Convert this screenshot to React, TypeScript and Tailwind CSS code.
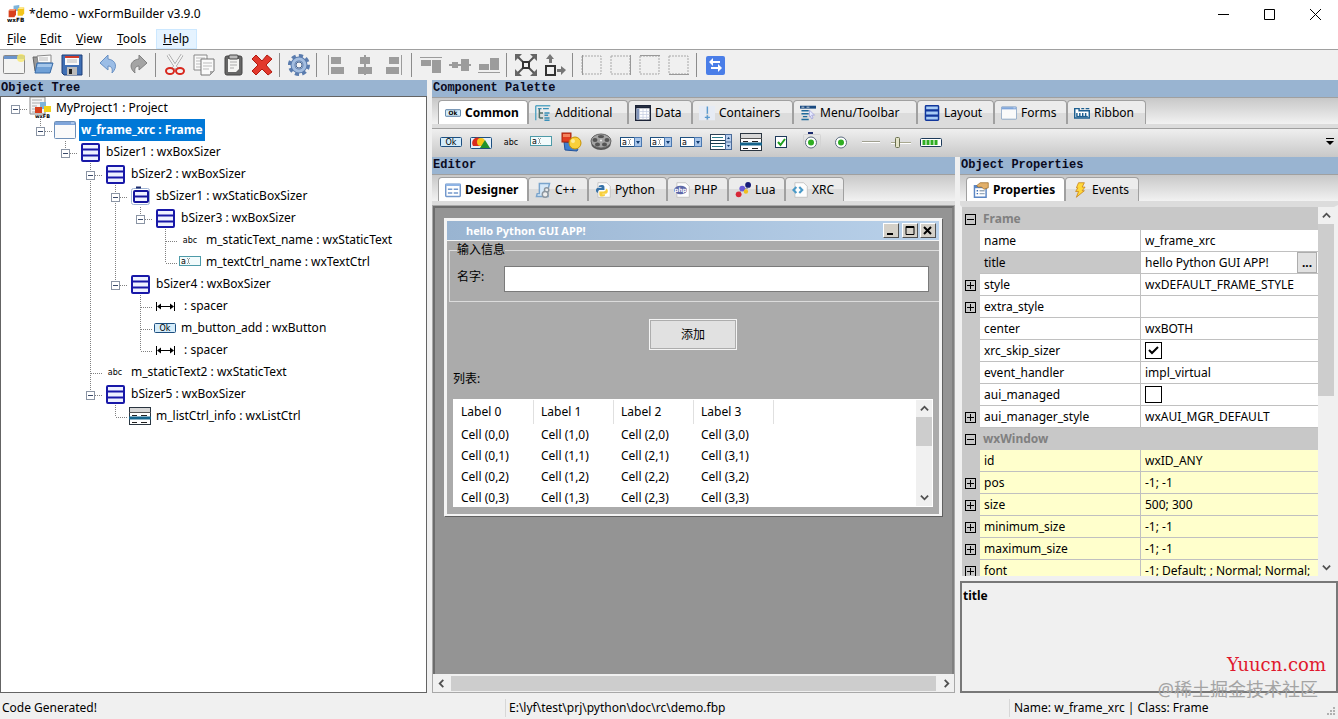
import React, { useState } from 'react';

type IconProps = { className?: string };

const Ico: React.FC<{ children: React.ReactNode; className?: string }> = ({ children, className = 'w-[22px] h-[22px]' }) => (
    <svg viewBox="0 0 22 22" className={`${className} shrink-0`} aria-hidden="true">{children}</svg>
);

const Tiny: React.FC<{ x: number; y: number; size?: number; children: string }> = ({ x, y, size = 9, children }) => (
    <text x={x} y={y} fontSize={size} fontFamily="DejaVu Sans" fill="#000">{children}</text>
);

/* ---------- component icons, shared by the tree, the palette and the tabs ---------- */

const CubesIcon = ({ className }: IconProps) => (
    <Ico className={className}>
        <path d="M8 1l7-1v7l-7 1z" fill="#7db4dc" />
        <path d="M13 5l2-2h6v7l-2 3h-6z" fill="#f2c41c" />
        <path d="M13 5l2-2h6l-1 2z" fill="#ffe98a" />
        <path d="M2 7l2-2h7v7l-2 3H2z" fill="#d8401c" />
        <path d="M2 7l2-2h7l-2 2z" fill="#f79a76" />
        <text x="0" y="21" fontSize="7" fontWeight="bold" fontFamily="DejaVu Sans">wxFB</text>
    </Ico>
);

const ProjectIcon = ({ className }: IconProps) => (
    <Ico className={className}>
        <path d="M1 0h15v17H1z" fill="#f4f4f4" stroke="#888" />
        <path d="M3 3h10M3 6h10M3 9h5M3 12h3M3 15h3" stroke="#aaa" />
        <path d="M11 5h6v7h-6z" fill="#7db4dc" />
        <path d="M15 9h7v6h-7z" fill="#f2d21c" />
        <path d="M6 10h7v6H6z" fill="#d8401c" />
        <text x="6" y="21" fontSize="5" fontWeight="bold" fontFamily="DejaVu Sans">wxFB</text>
    </Ico>
);

const FrameIcon = ({ className }: IconProps) => (
    <Ico className={className}>
        <rect x="0.5" y="2.5" width="21" height="17" rx="1" fill="#fafafa" stroke="#6d8fb8" />
        <path d="M1 3h20v3H1z" fill="#7fa5da" />
        <path d="M17 4h3" stroke="#dbe8fa" />
    </Ico>
);

const SizerIcon = ({ className }: IconProps) => (
    <Ico className={className}>
        <rect x="3" y="3" width="17" height="17" rx="1" fill="#eef1ff" stroke="#1818a8" strokeWidth="2" />
        <path d="M3 8.5h17M3 14.5h17" stroke="#1818a8" strokeWidth="2" />
    </Ico>
);

const StaticSizerIcon = ({ className }: IconProps) => (
    <Ico className={className}>
        <rect x="2.5" y="3.5" width="18" height="16" rx="2" fill="none" stroke="#a0b4d4" />
        <rect x="5" y="6" width="14" height="11" rx="1" fill="#eef0ff" stroke="#14149c" strokeWidth="2" />
        <path d="M5 11.5h14" stroke="#14149c" strokeWidth="2" />
        <path d="M7 2.5h5" stroke="#1a2a6c" strokeWidth="2" />
    </Ico>
);

const AbcIcon = ({ className }: IconProps) => (
    <Ico className={className}>
        <text x="11" y="14" fontSize="8" textAnchor="middle" fontFamily="DejaVu Sans">abc</text>
    </Ico>
);

const TextCtrlIcon = ({ className }: IconProps) => (
    <Ico className={className}>
        <rect x="0.5" y="5.5" width="21" height="9" fill="#f2fbfc" stroke="#4d9aa8" />
        <Tiny x={2} y={13} size={8}>a</Tiny>
        <path d="M8 7.5h1m1 0h1M9.5 8v4M8 12.5h1m1 0h1" stroke="#999" />
    </Ico>
);

const ButtonIcon = ({ className }: IconProps) => (
    <Ico className={className}>
        <rect x="0.5" y="6.5" width="21" height="9" rx="1" fill="#d5ecfa" stroke="#1d4f80" />
        <text x="11" y="14" fontSize="8" textAnchor="middle" fontFamily="DejaVu Sans">Ok</text>
    </Ico>
);

const SpacerIcon = ({ className }: IconProps) => (
    <Ico className={className}>
        <path d="M2.5 7v9M20.5 7v9M4 11.5h15" stroke="#000" />
        <path d="M3 11.5l4-3v6zM20 11.5l-4-3v6z" />
    </Ico>
);

const ListCtrlIcon = ({ className }: IconProps) => (
    <Ico className={className}>
        <rect x="0.5" y="2.5" width="21" height="17" fill="#fff" stroke="#2a3540" />
        <path d="M1 3h20v4H1z" fill="#d8d8d8" />
        <path d="M0 7.5h22" stroke="#555" />
        <path d="M0 13h22" stroke="#14648c" strokeWidth="3" />
        <path d="M3 10.5h5M12 10.5h6M3 17.5h5M12 17.5h6" stroke="#222" />
    </Ico>
);

const BitmapButtonIcon = () => (
    <Ico>
        <rect x="0.5" y="6.5" width="21" height="11" rx="1" fill="#e4f0fa" stroke="#1d4f80" />
        <path d="M3 15a5 5 0 0 1 9-6v6z" fill="#d92b1e" />
        <circle cx="11" cy="11" r="4" fill="#f5c518" />
        <path d="M10 17l5-8 5 8z" fill="#21912b" />
    </Ico>
);

const BitmapIcon = () => (
    <Ico>
        <path d="M4 11l8 1 6 6-1 2-12-1z" fill="#3f7fd0" stroke="#22539a" />
        <rect x="2" y="2" width="9" height="9" fill="#e03c20" stroke="#a4240f" />
        <path d="M3 3h7v3H3z" fill="#f4825c" />
        <circle cx="15" cy="12" r="6" fill="#f9cf3a" stroke="#c79205" />
        <circle cx="13" cy="10" r="2" fill="#fdeb9a" />
    </Ico>
);

const AnimIcon = () => (
    <Ico>
        <ellipse cx="11" cy="12" rx="10" ry="7" fill="#555" />
        <ellipse cx="11" cy="10" rx="10" ry="7" fill="#a4a4a4" stroke="#666" />
        <ellipse cx="11" cy="5.5" rx="3" ry="1.5" fill="#555" />
        <ellipse cx="5" cy="9" rx="2.500" ry="2" fill="#555" />
        <ellipse cx="17" cy="9" rx="2.500" ry="2" fill="#555" />
        <ellipse cx="7.500" cy="13.500" rx="2.500" ry="2" fill="#555" />
        <ellipse cx="14.500" cy="13.500" rx="2.500" ry="2" fill="#555" />
        <circle cx="11" cy="9.500" r="1" fill="#eee" />
    </Ico>
);

const ComboIcon: React.FC<{ caret?: boolean }> = ({ caret = true }) => (
    <Ico>
        <rect x="0.5" y="6.5" width="21" height="9" fill="#fff" stroke="#1d4f80" />
        <rect x="14.5" y="6.5" width="7" height="9" fill="#a9c6ea" stroke="#4a78b0" />
        <path d="M16 10h4l-2 3z" fill="#123c70" />
        <Tiny x={2} y={14} size={8}>a</Tiny>
        {caret && <path d="M8 8.5h1m1 0h1M9.5 9v4M8 13.5h1m1 0h1" stroke="#999" />}
    </Ico>
);

const ListBoxIcon = () => (
    <Ico>
        <rect x="0.5" y="3.5" width="21" height="15" fill="#fff" stroke="#2a3f55" />
        <path d="M2 6.5h11M2 15.5h11" stroke="#2a7a8c" />
        <path d="M0 9.5h15M0 12.5h15" stroke="#14384c" />
        <rect x="15.5" y="3.5" width="6" height="15" fill="#b9cfee" stroke="#4a6a98" />
        <path d="M17 8h3l-1.500-2zM17 14h3l-1.500 2z" fill="#123c70" />
        <path d="M16 11h5" stroke="#4a6a98" />
    </Ico>
);

const CheckIcon = () => (
    <Ico>
        <rect x="5.500" y="5.500" width="11" height="11" fill="#fff" stroke="#1d3a5a" />
        <path d="M8 11l2.500 3L15 8" fill="none" stroke="#1ea01e" strokeWidth="2" />
    </Ico>
);

const RadioIcon: React.FC<{ boxed?: boolean }> = ({ boxed }) => (
    <Ico>
        {boxed && <path d="M8 2h5" stroke="#1a2a6c" strokeWidth="2" />}
        {boxed && <rect x="3.500" y="3.500" width="17" height="15" rx="1" fill="none" stroke="#d4d4d4" />}
        <circle cx="11" cy="11.500" r="5.500" fill="#fff" stroke="#5d6d80" />
        <circle cx="11" cy="11.500" r="3" fill="#2fae22" />
    </Ico>
);

const LineIcon = () => (
    <Ico>
        <path d="M2 10.500h18" stroke="#a0a090" />
        <path d="M2 11.500h18" stroke="#fff" />
    </Ico>
);

const SliderIcon = () => (
    <Ico>
        <path d="M1 11.500h20" stroke="#a8a890" />
        <path d="M1 12.500h20" stroke="#fff" />
        <rect x="5.500" y="6.500" width="4" height="10" rx="1" fill="#e4e4c8" stroke="#6a7050" />
    </Ico>
);

const GaugeIcon = () => (
    <Ico>
        <rect x="0.500" y="7.500" width="21" height="8" rx="1" fill="#fff" stroke="#1d3a5a" />
        <path d="M4 9v5M8 9v5M12 9v5M16 9v5" stroke="#2fae22" strokeWidth="3" />
    </Ico>
);

const AdditionalIcon = ({ className }: IconProps) => (
    <Ico className={className}>
        <path d="M1 1h20M1 1v20" stroke="#5aa7c4" strokeWidth="2" />
        <path d="M6 5v13M6 18h5M6 11h5" fill="none" stroke="#4d6f6a" strokeWidth="2" />
        <path d="M4 5h5M11 5h8M13 11h7M13 14h5M13 18h7M13 21h7" stroke="#3a90b8" strokeWidth="2" />
    </Ico>
);

const DataIcon = ({ className }: IconProps) => (
    <Ico className={className}>
        <rect x="1" y="1" width="20" height="20" fill="#fff" stroke="#1c2438" strokeWidth="2" />
        <path d="M1 3h20" stroke="#1c2438" strokeWidth="3" />
        <path d="M4 5v15" stroke="#8296bc" strokeWidth="4" />
        <path d="M6 9h14M6 13h14M6 17h14M11 5v15M16 5v15" stroke="#c4cce0" />
    </Ico>
);

const ContainersIcon = ({ className }: IconProps) => (
    <Ico className={className}>
        <path d="M0 1h10v20H0zM13 1h9v20h-9z" fill="#e6ebf4" />
        <path d="M11.500 2v10M11.500 14v6M8 17h7" stroke="#5a9ad0" strokeWidth="2" />
    </Ico>
);

const MenuIcon = ({ className }: IconProps) => (
    <Ico className={className}>
        <path d="M0 3h22" stroke="#1a4a80" strokeWidth="4" />
        <path d="M2 3h4M9 3h4" stroke="#fff" />
        <path d="M2 8h10M2 12h10M4 16h6M2 20h10" stroke="#1f6a9c" strokeWidth="2" />
        <path d="M13 7l7 7h-4l2 4-2 1-2-4-1 1z" fill="#e8ecff" stroke="#9a9ad8" />
    </Ico>
);

const LayoutIcon = ({ className }: IconProps) => (
    <Ico className={className}>
        <rect x="2" y="1" width="18" height="20" rx="1" fill="#a9cdf5" stroke="#12379c" strokeWidth="2" />
        <path d="M2 7.500h18M2 14.500h18" stroke="#12379c" strokeWidth="3" />
    </Ico>
);

const RibbonIcon = ({ className }: IconProps) => (
    <Ico className={className}>
        <path d="M1 5h6v3h14v10H1z" fill="#fff" stroke="#1d5f90" strokeWidth="2" />
        <path d="M10 5h4M16 5h5" stroke="#1d5f90" strokeWidth="2" />
        <path d="M4 11v4M8 11v4M12 11v4M16 11v4" stroke="#1d5f90" strokeWidth="2" />
        <path d="M3 16h16" stroke="#1d5f90" strokeWidth="2" />
    </Ico>
);

const DesignerIcon = ({ className }: IconProps) => (
    <Ico className={className}>
        <rect x="1" y="3" width="20" height="17" rx="1" fill="#fff" stroke="#7398cc" strokeWidth="2" />
        <path d="M1 4h20" stroke="#8fb4e4" strokeWidth="3" />
        <path d="M4 10h6M4 15h6M12 10h6M12 15h6" stroke="#7398cc" strokeWidth="2" />
    </Ico>
);

const CppIcon = ({ className }: IconProps) => (
    <Ico className={className}>
        <path d="M6 2h14l-3 12 1 6H2l1-4h3z" fill="#d6e8f8" stroke="#7aa4cc" strokeWidth="2" />
        <circle cx="16" cy="11" r="3" fill="#eee" stroke="#8c969f" strokeWidth="2" />
        <circle cx="14" cy="17" r="4" fill="#eee" stroke="#8c969f" strokeWidth="2" />
    </Ico>
);

const PageIcon: React.FC<{ className?: string; children: React.ReactNode }> = ({ className, children }) => (
    <Ico className={className}>
        <path d="M4 1h12l5 5v15H4z" fill="#fdfdfd" stroke="#b8b8b8" />
        {children}
    </Ico>
);

const PythonIcon = ({ className }: IconProps) => (
    <PageIcon className={className}>
        <path d="M9 4c4 0 4 2 4 4v3H7c-3 0-3 3-3 4-4-1-3-7 0-7h5V7H5c0-2 1-3 4-3z" fill="#3672a8" />
        <path d="M10 20c-4 0-4-2-4-4v-3h6c3 0 3-3 3-4 4 1 3 7 0 7h-5v1h4c0 2-1 3-4 3z" fill="#f8cf3c" />
    </PageIcon>
);

const PhpIcon = ({ className }: IconProps) => (
    <PageIcon className={className}>
        <ellipse cx="9" cy="11" rx="9" ry="6" fill="#5c68a8" />
        <text x="9" y="14" fontSize="8" fontWeight="bold" textAnchor="middle" fill="#fff" fontFamily="DejaVu Sans">php</text>
    </PageIcon>
);

const LuaIcon = ({ className }: IconProps) => (
    <Ico className={className}>
        <path d="M3 19L10 9h8" stroke="#888" fill="none" />
        <circle cx="18" cy="4" r="4" fill="#161c78" />
        <circle cx="10" cy="9" r="4" fill="#6a5ad8" />
        <circle cx="15" cy="13" r="3" fill="#f0c020" />
        <circle cx="5" cy="17" r="4" fill="#d82838" />
    </Ico>
);

const XrcIcon = ({ className }: IconProps) => (
    <PageIcon className={className}>
        <path d="M6 7l-4 4 4 4M10 7l4 4-4 4" fill="none" stroke="#4a9ac8" strokeWidth="3" />
    </PageIcon>
);

const PropertiesIcon = ({ className }: IconProps) => (
    <Ico className={className}>
        <path d="M2 5h16v16H2z" fill="#fff" stroke="#5b86c4" strokeWidth="2" />
        <path d="M2 7h16" stroke="#5b86c4" strokeWidth="3" />
        <path d="M5 12h2M5 16h2" stroke="#3a6ab0" strokeWidth="2" />
        <path d="M9 12h7M9 16h7" stroke="#9ab" strokeWidth="2" />
        <path d="M5 5l5-4h11v7l-6 2-3-3H7z" fill="#e2b06a" stroke="#9c6c28" />
    </Ico>
);

const EventsIcon = ({ className }: IconProps) => (
    <Ico className={className}>
        <path d="M9 1h8l-3 6h4l-4 5h3L6 21l3-8H5l3-5H6z" fill="#ffd83a" stroke="#c47a10" />
    </Ico>
);

/* ---------- main toolbar ---------- */

const dotted = <rect x="1" y="2" width="19" height="18" fill="none" stroke="#a8a8a8" strokeDasharray="2 1" strokeWidth="1" />;

const toolbar: { name: string; icon: React.ReactNode }[][] = [
    [
        { name: 'New', icon: <><rect x="0.500" y="1.500" width="21" height="18" rx="1" fill="#f4f4f2" stroke="#888" /><path d="M1 2h20v3H1z" fill="#6a94cc" /><circle cx="18" cy="4" r="4" fill="#f7e96a" fillOpacity="0.800" /></> },
        { name: 'Open', icon: <><path d="M1 3h8l2 2h7v12H3z" fill="#999" stroke="#666" /><path d="M5 2l14-1v8H6z" fill="#fafafa" stroke="#888" /><path d="M7 4h9M7 6h9" stroke="#bbb" /><path d="M5 9h16l-3 10H3z" fill="#6fa0d6" stroke="#3a6ca8" /><path d="M6 10h14l-1 3H5z" fill="#a4c6ea" /></> },
        { name: 'Save', icon: <><path d="M1 1h20v20H3l-2-2z" fill="#3f6fb4" stroke="#1f3f78" /><path d="M4 2h14v9H4z" fill="#fafafa" /><path d="M4 3h14" stroke="#d03a2a" strokeWidth="2" /><path d="M6 6h10M6 8h10" stroke="#bbb" /><path d="M6 13h10v8H6z" fill="#bbb" /><path d="M8 15h3v5H8z" fill="#222" /></> },
    ],
    [
        { name: 'Undo', icon: <path d="M2 9l8-8v4c8 1 10 8 4 14 1-5-1-7-4-7v4z" fill="#9bbde6" stroke="#6890c4" /> },
        { name: 'Redo', icon: <path d="M20 9l-8-8v4C4 6 1 13 8 19c-1-5 1-7 4-7v4z" fill="#a4a4a4" stroke="#808080" /> },
    ],
    [
        { name: 'Cut', icon: <><path d="M4 1l9 14M18 1L9 15" stroke="#888" strokeWidth="3" /><path d="M4 1l9 14M18 1L9 15" stroke="#f4f4f4" strokeWidth="2" /><ellipse cx="6" cy="17" rx="4" ry="3" fill="none" stroke="#d8281e" strokeWidth="2" /><ellipse cx="16" cy="17" rx="4" ry="3" fill="none" stroke="#d8281e" strokeWidth="2" /></> },
        { name: 'Copy', icon: <><path d="M1 1h13v15H1z" fill="#fafafa" stroke="#888" /><path d="M3 4h9M3 7h5M3 10h5M3 13h5" stroke="#bbb" /><path d="M8 5h13v12l-4 4H8z" fill="#fafafa" stroke="#777" /><path d="M10 9h9M10 12h9M10 15h6" stroke="#bbb" /><path d="M17 21v-4h4z" fill="#aaa" /></> },
        { name: 'Paste', icon: <><rect x="3" y="2" width="17" height="19" rx="2" fill="#666" stroke="#444" /><path d="M6 5h11v10l-3 3H6z" fill="#f4f4f2" /><rect x="7" y="1" width="9" height="4" rx="1" fill="#bbb" stroke="#444" /><path d="M8 8h7M8 11h7M8 14h4" stroke="#aaa" /></> },
        { name: 'Delete', icon: <path d="M5 1l6 6 5-6 5 4-6 6 6 7-4 3-6-6-6 6-4-4 6-6-6-6z" fill="#e2382c" stroke="#b01a10" /> },
    ],
    [
        { name: 'Generate code', icon: <><circle cx="11" cy="11" r="9" fill="none" stroke="#5a7cae" strokeWidth="4" strokeDasharray="4 3" /><circle cx="11" cy="11" r="6" fill="none" stroke="#5a7cae" strokeWidth="5" /><circle cx="11" cy="11" r="6" fill="none" stroke="#a4bee0" strokeWidth="3" /><circle cx="11" cy="11" r="3" fill="#f4f4f4" stroke="#4a6894" /></> },
    ],
    [
        { name: 'Align left', icon: <path d="M3 1h1v20H3zM6 3h10v7H6zM6 13h13v7H6z" fill="#9c9c9c" /> },
        { name: 'Align center horizontal', icon: <path d="M10 1h2v20h-2zM6 3h10v7H6zM4 13h14v7H4z" fill="#9c9c9c" /> },
        { name: 'Align right', icon: <path d="M18 1h1v20h-1zM6 3h10v7H6zM3 13h13v7H3z" fill="#9c9c9c" /> },
    ],
    [
        { name: 'Align top', icon: <path d="M0 3h22v1H0zM1 6h10v6H1zM12 6h9v13h-9z" fill="#9c9c9c" /> },
        { name: 'Align center vertical', icon: <path d="M0 10h22v2H0zM3 8h6v6H3zM12 5h8v12h-8z" fill="#9c9c9c" /> },
        { name: 'Align bottom', icon: <path d="M0 18h22v1H0zM1 10h10v6H1zM12 4h9v12h-9z" fill="#9c9c9c" /> },
    ],
    [
        { name: 'Expand', icon: <><path d="M2 2l18 18M20 2L2 20" stroke="#555" strokeWidth="2" /><path d="M0 0h7L0 7zM22 0h-7l7 7zM0 22h7l-7-7zM22 22h-7l7-7z" fill="#666" /><rect x="8" y="8" width="6" height="6" fill="#f0f0f0" stroke="#333" strokeWidth="2" /></> },
        { name: 'Stretch', icon: <><rect x="2" y="12" width="9" height="9" fill="#f0f0f0" stroke="#333" strokeWidth="2" /><path d="M6 0l4 5H8v4H5V5H2zM22 16l-5-4v3h-4v3h4v3z" fill="#777" /></> },
    ],
    [
        { name: 'Left border', icon: <>{dotted}<path d="M1.500 1v20" stroke="#999" /></> },
        { name: 'Right border', icon: <>{dotted}<path d="M20.500 1v20" stroke="#999" /></> },
        { name: 'Top border', icon: <>{dotted}<path d="M1 1.500h20" stroke="#999" /></> },
        { name: 'Bottom border', icon: <>{dotted}<path d="M1 20.500h20" stroke="#999" /></> },
    ],
    [
        { name: 'XRC preview', icon: <><rect x="1" y="2" width="19" height="19" rx="2" fill="#4a7ee8" /><path d="M6 8h9M6 14h9" stroke="#fff" strokeWidth="2" /><path d="M4 8l4-4v8zM17 14l-4-4v8z" fill="#fff" /></> },
    ],
];

const menus = [
    { label: 'File', width: 'w-[33px]' },
    { label: 'Edit', width: 'w-9' },
    { label: 'View', width: 'w-[41px]' },
    { label: 'Tools', width: 'w-[46px]' },
    { label: 'Help', width: 'w-[41px]' },
];

/* ---------- data ---------- */

type TreeRow = {
    label: string;
    icon: React.FC<IconProps>;
    // one entry per level: v = line passes, t = tee, l = last child, r = root, '' = empty
    guides: string[];
    open?: boolean;
    selected?: boolean;
};

const tree: TreeRow[] = [
    { label: 'MyProject1 : Project', icon: ProjectIcon, guides: ['r'], open: true },
    { label: 'w_frame_xrc : Frame', icon: FrameIcon, guides: ['', 'l'], open: true, selected: true },
    { label: 'bSizer1 : wxBoxSizer', icon: SizerIcon, guides: ['', '', 'l'], open: true },
    { label: 'bSizer2 : wxBoxSizer', icon: SizerIcon, guides: ['', '', '', 't'], open: true },
    { label: 'sbSizer1 : wxStaticBoxSizer', icon: StaticSizerIcon, guides: ['', '', '', 'v', 't'], open: true },
    { label: 'bSizer3 : wxBoxSizer', icon: SizerIcon, guides: ['', '', '', 'v', 'v', 'l'], open: true },
    { label: 'm_staticText_name : wxStaticText', icon: AbcIcon, guides: ['', '', '', 'v', 'v', '', 't'] },
    { label: 'm_textCtrl_name : wxTextCtrl', icon: TextCtrlIcon, guides: ['', '', '', 'v', 'v', '', 'l'] },
    { label: 'bSizer4 : wxBoxSizer', icon: SizerIcon, guides: ['', '', '', 'v', 'l'], open: true },
    { label: '\u00a0: spacer', icon: SpacerIcon, guides: ['', '', '', 'v', '', 't'] },
    { label: 'm_button_add : wxButton', icon: ButtonIcon, guides: ['', '', '', 'v', '', 't'] },
    { label: '\u00a0: spacer', icon: SpacerIcon, guides: ['', '', '', 'v', '', 'l'] },
    { label: 'm_staticText2 : wxStaticText', icon: AbcIcon, guides: ['', '', '', 't'] },
    { label: 'bSizer5 : wxBoxSizer', icon: SizerIcon, guides: ['', '', '', 'l'], open: true },
    { label: 'm_listCtrl_info : wxListCtrl', icon: ListCtrlIcon, guides: ['', '', '', '', 'l'] },
];

type TabDef = { label: string; icon: React.FC<IconProps>; width: string };

const paletteTabs: TabDef[] = [
    { label: 'Common', icon: ButtonIcon, width: 'w-[90px]' },
    { label: 'Additional', icon: AdditionalIcon, width: 'w-[100px]' },
    { label: 'Data', icon: DataIcon, width: 'w-16' },
    { label: 'Containers', icon: ContainersIcon, width: 'w-[101px]' },
    { label: 'Menu/Toolbar', icon: MenuIcon, width: 'w-[124px]' },
    { label: 'Layout', icon: LayoutIcon, width: 'w-[77px]' },
    { label: 'Forms', icon: FrameIcon, width: 'w-[73px]' },
    { label: 'Ribbon', icon: RibbonIcon, width: 'w-[79px]' },
];

const editorTabs: TabDef[] = [
    { label: 'Designer', icon: DesignerIcon, width: 'w-[90px]' },
    { label: 'C++', icon: CppIcon, width: 'w-[60px]' },
    { label: 'Python', icon: PythonIcon, width: 'w-[79px]' },
    { label: 'PHP', icon: PhpIcon, width: 'w-[61px]' },
    { label: 'Lua', icon: LuaIcon, width: 'w-[57px]' },
    { label: 'XRC', icon: XrcIcon, width: 'w-[59px]' },
];

const propertyTabs: TabDef[] = [
    { label: 'Properties', icon: PropertiesIcon, width: 'w-[99px]' },
    { label: 'Events', icon: EventsIcon, width: 'w-[74px]' },
];

const palette: { name: string; icon: React.ReactNode }[] = [
    { name: 'wxButton', icon: <ButtonIcon /> },
    { name: 'wxBitmapButton', icon: <BitmapButtonIcon /> },
    { name: 'wxStaticText', icon: <AbcIcon /> },
    { name: 'wxTextCtrl', icon: <TextCtrlIcon /> },
    { name: 'wxStaticBitmap', icon: <BitmapIcon /> },
    { name: 'wxAnimationCtrl', icon: <AnimIcon /> },
    { name: 'wxComboBox', icon: <ComboIcon /> },
    { name: 'wxBitmapComboBox', icon: <ComboIcon /> },
    { name: 'wxChoice', icon: <ComboIcon caret={false} /> },
    { name: 'wxListBox', icon: <ListBoxIcon /> },
    { name: 'wxListCtrl', icon: <ListCtrlIcon /> },
    { name: 'wxCheckBox', icon: <CheckIcon /> },
    { name: 'wxRadioBox', icon: <RadioIcon boxed /> },
    { name: 'wxRadioButton', icon: <RadioIcon /> },
    { name: 'wxStaticLine', icon: <LineIcon /> },
    { name: 'wxSlider', icon: <SliderIcon /> },
    { name: 'wxGauge', icon: <GaugeIcon /> },
];

type Prop = { name: string; value?: string | boolean; group?: boolean; expandable?: boolean; inherited?: boolean };

const properties: Prop[] = [
    { name: 'Frame', group: true },
    { name: 'name', value: 'w_frame_xrc' },
    { name: 'title', value: 'hello Python GUI APP!' },
    { name: 'style', value: 'wxDEFAULT_FRAME_STYLE', expandable: true },
    { name: 'extra_style', value: '', expandable: true },
    { name: 'center', value: 'wxBOTH' },
    { name: 'xrc_skip_sizer', value: true },
    { name: 'event_handler', value: 'impl_virtual' },
    { name: 'aui_managed', value: false },
    { name: 'aui_manager_style', value: 'wxAUI_MGR_DEFAULT', expandable: true },
    { name: 'wxWindow', group: true },
    { name: 'id', value: 'wxID_ANY', inherited: true },
    { name: 'pos', value: '-1; -1', expandable: true, inherited: true },
    { name: 'size', value: '500; 300', expandable: true, inherited: true },
    { name: 'minimum_size', value: '-1; -1', expandable: true, inherited: true },
    { name: 'maximum_size', value: '-1; -1', expandable: true, inherited: true },
    { name: 'font', value: '-1; Default; ; Normal; Normal;', expandable: true, inherited: true },
];

/* ---------- building blocks ---------- */

const Caption: React.FC<{ children: string; className?: string }> = ({ children, className = 'h-[17px]' }) => (
    <h2 className={`${className} shrink-0 bg-[#99b4d1] pl-px font-['Liberation_Mono',monospace] text-[12px] leading-[16px] font-bold text-[#0a0a1e]`}>
        {children}
    </h2>
);

const Tabs: React.FC<{ tabs: TabDef[] }> = ({ tabs }) => {
    const [active, setActive] = useState(0);
    return (
        <div role="tablist" className="flex h-[31px] shrink-0 items-end overflow-hidden border-t border-b-4 border-t-[#a0a0a0] border-b-[#dcdcdc] bg-linear-to-b from-[#c8c8c8] to-[#f2f2f2] pl-[6px]">
            {tabs.map((tab, i) => {
                const Icon = tab.icon;
                return (
                    <button
                        key={tab.label}
                        role="tab"
                        aria-selected={i === active}
                        onClick={() => setActive(i)}
                        className={`${tab.width} flex h-6 shrink-0 items-center gap-1 rounded-t-sm border border-b-0 border-[#a0a0a0] pl-[6px] whitespace-nowrap ${i === active ? 'bg-white font-bold' : 'bg-linear-to-b from-[#ececec] from-50% to-[#dcdcdc] to-50%'}`}
                    >
                        <Icon className="h-4 w-4" />
                        {tab.label}
                    </button>
                );
            })}
        </div>
    );
};

const Arrow: React.FC<{ dir: 'up' | 'down' | 'left' | 'right' }> = ({ dir }) => {
    const d = { up: 'M1 7l4-4 4 4', down: 'M1 3l4 4 4-4', left: 'M7 1L3 5l4 4', right: 'M3 1l4 4-4 4' }[dir];
    return (
        <button aria-label={`Scroll ${dir}`} className="flex h-[17px] w-4 shrink-0 items-center justify-center">
            <svg viewBox="0 0 10 10" className="h-[9px] w-[9px]"><path d={d} fill="none" stroke="#505050" strokeWidth="2" /></svg>
        </button>
    );
};

const Guide: React.FC<{ kind: string; open?: boolean; own: boolean }> = ({ kind, open, own }) => {
    const line = { stroke: '#808080', strokeDasharray: '1 1' };
    const glyph = (
        <svg viewBox="0 0 25 22" className="h-[22px] w-[25px]" shapeRendering="crispEdges">
            {kind && kind !== 'r' && <path d={`M12.5 0V${kind === 'l' ? 12 : 22}`} {...line} />}
            {own && <path d="M13 12.5H25" {...line} />}
            {open && <rect x="8.5" y="8.5" width="8" height="8" fill="#fff" stroke="#8a94a4" />}
            {open && <path d="M10 12.5h5" stroke="#3a4a6a" />}
        </svg>
    );
    return open ? <button aria-label="Collapse" className="shrink-0">{glyph}</button> : <span className="shrink-0">{glyph}</span>;
};

const ObjectTree = () => (
    <ul role="tree" className="flex-1 border border-[#646464] bg-white pl-0.5">
        {tree.map((row, i) => {
            const Icon = row.icon;
            return (
                <li key={i} role="treeitem" aria-selected={!!row.selected} className="flex h-[22px] items-center">
                    {row.guides.map((kind, level) => {
                        const own = level === row.guides.length - 1;
                        return <Guide key={level} kind={kind} own={own} open={own && row.open} />;
                    })}
                    <Icon className="ml-px h-[22px] w-[22px]" />
                    <span className={`ml-[3px] px-0.5 leading-[22px] whitespace-nowrap ${row.selected ? 'bg-[#0078d7] font-bold text-white' : ''}`}>
                        {row.label}
                    </span>
                </li>
            );
        })}
    </ul>
);

const CaptionButton: React.FC<{ name: string; d: string; width?: number }> = ({ name, d, width = 2 }) => (
    <button aria-label={name} className="h-[15px] w-4 border border-t-white border-r-[#505050] border-b-[#505050] border-l-white bg-[#d4d0c8]">
        <svg viewBox="0 0 14 13" className="h-[13px] w-[14px]"><path d={d} fill="none" stroke="#000" strokeWidth={width} /></svg>
    </button>
);

const FormPreview = () => (
    <section className="flex h-[299px] w-[499px] flex-col border border-t-[#f4f4f4] border-r-[#606060] border-b-[#606060] border-l-[#f4f4f4] bg-[#ababab]">
        <div className="flex flex-1 flex-col border-2 border-r-[3px] border-[#f4f4f4]">
            <header className="flex h-5 shrink-0 items-center border-b border-[#f4f4f4] bg-linear-to-r from-[#99b4d1] to-[#b9d1ea] pr-[3px] pl-[19px]">
                <h3 className="flex-1 text-[11px] font-bold text-white">hello Python GUI APP!</h3>
                <CaptionButton name="Minimize" d="M3 10h6" />
                <span className="w-[3px]" />
                <CaptionButton name="Maximize" d="M3 2.5h8v8H3zM3 3.5h8" width={1} />
                <span className="w-0.5" />
                <CaptionButton name="Close" d="M3 3l7 7M10 3l-7 7" />
            </header>
            <fieldset className="ml-0.5 h-[61px] shrink-0 border border-r-0 border-[#dcdcdc] pr-[10px] pl-[7px]">
                <legend className="px-0 leading-[18px]">输入信息</legend>
                <div className="flex items-center pt-[7px]">
                    <label htmlFor="m_textCtrl_name" className="w-[47px] pb-1">名字:</label>
                    <input id="m_textCtrl_name" type="text" className="h-[26px] flex-1 border border-[#7a7a7a] bg-white px-1" />
                </div>
            </fieldset>
            <div className="flex justify-center pt-[17px]">
                <button className="h-[31px] w-[88px] border border-[#f4f4f4] bg-[#e1e1e1] outline -outline-offset-2 outline-[#adadad]">添加</button>
            </div>
            <p className="mt-[20px] pl-[6px] leading-[18px]">列表:</p>
            <div className="mr-[6px] ml-[6px] mt-[11px] flex h-[108px] border border-white bg-white">
                <div className="flex-1 overflow-hidden">
                    <table className="w-80 table-fixed border-separate border-spacing-0 text-left">
                        <thead>
                            <tr className="h-6">
                                {[0, 1, 2, 3].map(col => (
                                    <th key={col} className="border-r border-[#e0e0e0] pl-[7px] font-normal">Label {col}</th>
                                ))}
                            </tr>
                        </thead>
                        <tbody>
                            {[0, 1, 2, 3].map(row => (
                                <tr key={row} className="h-[21px]">
                                    {[0, 1, 2, 3].map(col => <td key={col} className="pl-[7px]">Cell ({col},{row})</td>)}
                                </tr>
                            ))}
                        </tbody>
                    </table>
                </div>
                <div className="flex w-4 flex-col bg-[#f0f0f0]">
                    <Arrow dir="up" />
                    <div className="h-[29px] bg-[#cdcdcd]" />
                    <div className="flex-1" />
                    <Arrow dir="down" />
                </div>
            </div>
        </div>
    </section>
);

const Toggle: React.FC<{ open: boolean; name: string }> = ({ open, name }) => (
    <button aria-label={`Toggle ${name}`} className="flex h-[11px] w-[11px] items-center justify-center border border-black">
        <svg viewBox="0 0 9 9" className="h-[9px] w-[9px] shrink-0" shapeRendering="crispEdges">
            <path d={open ? 'M1 4.5h7' : 'M1 4.5h7M4.5 1v7'} stroke="#000" />
        </svg>
    </button>
);

const PropertyRow: React.FC<{ prop: Prop }> = ({ prop }) => {
    const [checked, setChecked] = useState(prop.value === true);
    const editing = prop.name === 'title';
    const id = `prop_${prop.name}`;
    const bg = prop.inherited ? 'bg-[#ffffcc]' : 'bg-white';

    if (prop.group) {
        return (
            <tr className="h-[22px] bg-[#c8c8c8]">
                <td className="pl-[3px]"><Toggle open name={prop.name} /></td>
                <th colSpan={2} className="pl-[3px] text-left font-bold text-[#808080]">{prop.name}</th>
            </tr>
        );
    }

    return (
        <tr className="h-[22px]">
            <td className="bg-[#c8c8c8] pl-[3px]">{prop.expandable && <Toggle open={false} name={prop.name} />}</td>
            <th className={`border-r border-b border-[#c0c0c0] pl-1 text-left font-normal ${editing ? 'bg-[#c8c8c8]' : bg}`}>
                <label htmlFor={id}>{prop.name}</label>
            </th>
            <td className={`border-b border-[#c0c0c0] whitespace-nowrap ${bg}`}>
                {typeof prop.value === 'boolean' ? (
                    <span className="relative ml-1 block h-[17px] w-[17px]">
                        <input
                            id={id}
                            type="checkbox"
                            checked={checked}
                            onChange={e => setChecked(e.target.checked)}
                            className="block h-[17px] w-[17px] appearance-none border border-black bg-white"
                        />
                        {checked && (
                            <svg viewBox="0 0 17 17" className="pointer-events-none absolute inset-0 h-[17px] w-[17px]">
                                <path d="M4 8l3 3 6-6" fill="none" stroke="#000" strokeWidth="2" />
                            </svg>
                        )}
                    </span>
                ) : (
                    <span className="flex">
                        <input id={id} type="text" defaultValue={prop.value} className="h-[21px] w-full min-w-0 flex-1 bg-transparent pl-1" />
                        {editing && <button className="mr-px h-[21px] w-5 shrink-0 border border-[#adadad] bg-[#e1e1e1] leading-3 font-bold">...</button>}
                    </span>
                )}
            </td>
        </tr>
    );
};

const PropertiesPanel = () => (
    <aside className="flex w-[378px] shrink-0 flex-col">
        <Caption>Object Properties</Caption>
        <Tabs tabs={propertyTabs} />
        <div className="flex min-h-0 flex-1 border-2 border-r-4 border-[#f0f0f0] border-t-[#dcdcdc]">
            <div className="flex-1 overflow-hidden bg-[#c8c8c8] pt-px">
                <table className="w-full table-fixed border-separate border-spacing-0">
                    <colgroup>
                        <col className="w-[18px]" />
                        <col className="w-[161px]" />
                        <col />
                    </colgroup>
                    <tbody>
                        {properties.map(prop => <PropertyRow key={prop.name} prop={prop} />)}
                    </tbody>
                </table>
            </div>
            <div className="flex w-4 flex-col bg-[#f0f0f0]">
                <Arrow dir="up" />
                <div className="h-[172px] bg-[#cdcdcd]" />
                <div className="flex-1" />
                <Arrow dir="down" />
            </div>
        </div>
        <div className="mt-[3px] h-[112px] shrink-0 border-2 border-[#787878] px-px pt-[4px] font-bold">title</div>
    </aside>
);

const App = () => (
    <div className="relative flex h-screen flex-col overflow-hidden bg-[#f0f0f0] font-['Noto_Sans','Noto_Sans_CJK_SC',sans-serif] text-[12px] leading-[18px] text-black">
        <header className="flex h-7 shrink-0 items-center bg-white pl-[7px]">
            <CubesIcon className="h-[18px] w-[18px]" />
            <h1 className="flex-1 pl-1">*demo - wxFormBuilder v3.9.0</h1>
            {[['Minimize', 'M0 5.5h11'], ['Maximize', 'M0.5 0.5h10v10H0.5z'], ['Close', 'M0 0l11 11M11 0L0 11']].map(([name, d]) => (
                <button key={name} aria-label={name} className="flex h-7 w-[46px] items-center justify-center">
                    <svg viewBox="0 0 11 11" className="h-[11px] w-[11px]"><path d={d} fill="none" stroke="#000" /></svg>
                </button>
            ))}
        </header>

        <nav className="flex h-[22px] shrink-0 items-center border-b border-[#a0a0a0] bg-white">
            {menus.map(({ label, width }) => (
                <button key={label} className={`${width} h-5 border pl-[6px] text-left ${label === 'Help' ? 'border-[#cce8ff] bg-[#e5f3ff]' : 'border-transparent'}`}>
                    <span className="underline">{label[0]}</span>{label.slice(1)}
                </button>
            ))}
        </nav>

        <div role="toolbar" className="flex h-[30px] shrink-0 items-center">
            {toolbar.map((group, i) => (
                <React.Fragment key={i}>
                    {i > 0 && <span className="mr-[5px] ml-0.5 h-6 w-px shrink-0 bg-[#8c8c8c]" />}
                    {group.map(item => (
                        <button key={item.name} aria-label={item.name} className="flex w-[29px] shrink-0 justify-start pl-[3px]">
                            <Ico>{item.icon}</Ico>
                        </button>
                    ))}
                </React.Fragment>
            ))}
        </div>

        <main className="flex min-h-0 flex-1">
            <aside className="flex w-[427px] shrink-0 flex-col">
                <Caption className="h-4">Object Tree</Caption>
                <ObjectTree />
            </aside>

            <div className="ml-[5px] flex min-w-0 flex-1 flex-col">
                <Caption>Component Palette</Caption>
                <Tabs tabs={paletteTabs} />
                <div role="toolbar" className="flex h-[29px] shrink-0 items-center border-t border-[#a0a0a0] bg-linear-to-b from-[#efefef] to-[#c8c8c8] pb-0.5 pl-1">
                    {palette.map(item => (
                        <button key={item.name} aria-label={item.name} className="flex w-[30px] shrink-0 justify-center">{item.icon}</button>
                    ))}
                    <span className="flex-1" />
                    <button aria-label="More components" className="mr-1">
                        <svg viewBox="0 0 8 8" className="h-2 w-2"><path d="M0 0.5h8" stroke="#000" /><path d="M0 3h8L4 7z" /></svg>
                    </button>
                </div>

                <div className="flex min-h-0 flex-1">
                    <section className="flex min-w-0 flex-1 flex-col">
                        <Caption>Editor</Caption>
                        <Tabs tabs={editorTabs} />
                        <div className="flex min-h-0 flex-1 flex-col border border-[#a8a8a8] bg-[#f0f0f0]">
                            <div className="min-h-0 flex-1 overflow-hidden border-2 border-r-[#808080] border-b-0 border-t-[#6c6c6c] border-l-[#6c6c6c] bg-[#949494] pt-[10px] pl-[9px]">
                                <FormPreview />
                            </div>
                            <div className="flex h-[18px] shrink-0 items-center">
                                <Arrow dir="left" />
                                <div className="mx-0.5 h-[15px] flex-1 bg-[#cdcdcd]" />
                                <Arrow dir="right" />
                            </div>
                        </div>
                    </section>
                    <div className="w-[5px] shrink-0" />
                    <PropertiesPanel />
                </div>
            </div>
        </main>

        <footer className="grid h-[26px] shrink-0 grid-cols-[505fr_504fr_329fr] items-center pt-1">
            <span className="pl-0.5">Code Generated!</span>
            <span className="border-l border-[#d7d7d7] pl-[3px]">E:\lyf\test\prj\python\doc\rc\demo.fbp</span>
            <span className="border-l border-[#d7d7d7] pl-1">Name: w_frame_xrc | Class: Frame</span>
        </footer>

        <svg viewBox="0 0 10 10" className="absolute right-0.5 bottom-0.5 h-[10px] w-[10px]">
            <path d="M7 1h2M4 4h2M7 4h2M1 7h2M4 7h2M7 7h2" stroke="#b0b0b0" strokeWidth="2" />
        </svg>
        <p className="absolute right-3 bottom-[42px] font-['DejaVu_Serif',serif] text-[18px] leading-[24px] text-[#e0182d]">Yuucn.com</p>
        <p className="absolute right-5 bottom-[18px] text-[18px] leading-[24px] text-[#a4a4a4]">@稀土掘金技术社区</p>
    </div>
);

export default App;
